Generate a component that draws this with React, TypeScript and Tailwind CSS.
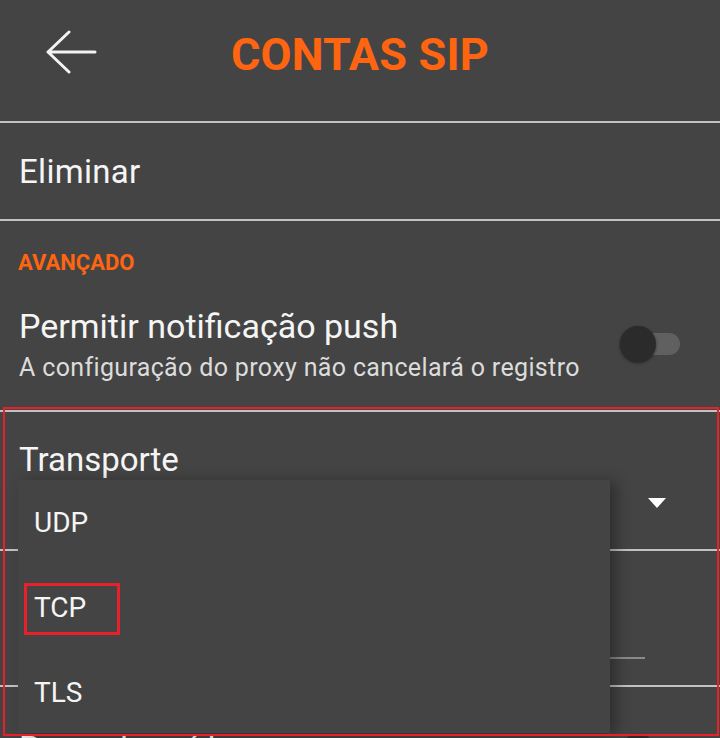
import React from 'react'

const options = ['UDP', 'TCP', 'TLS']

function BackArrow() {
  return (
    <svg width="52" height="44" viewBox="0 0 52 44" fill="none">
      <path d="M50 22H3M24 2L3 22l21 20" stroke="#f2f2f2" strokeWidth="3" strokeLinecap="round" strokeLinejoin="round" />
    </svg>
  )
}

function Toggle() {
  return (
    <div className="relative w-[64px] h-[40px]">
      <div className="absolute left-[22px] top-[9px] w-[40px] h-[22px] rounded-full bg-[#606060]" />
      <div className="absolute left-[2px] top-[2px] w-[36px] h-[36px] rounded-full bg-[#2b2b2b] shadow-[0_1px_3px_rgba(0,0,0,0.5)]" />
    </div>
  )
}

function Divider() {
  return <div className="h-[2px] bg-[#c2c2c2]" />
}

export default function App() {
  return (
    <div className="relative w-[720px] h-[738px] overflow-hidden bg-[#444444] text-[#f5f5f5] font-['Roboto',sans-serif]">
      {/* header */}
      <div className="relative h-[121px] flex items-center justify-center pb-[12px]">
        <div className="absolute left-[45px] top-[30px]">
          <BackArrow />
        </div>
        <h1 className="text-[45px] font-bold text-[#ff6410] leading-none tracking-[0.2px]">CONTAS SIP</h1>
      </div>
      <Divider />

      <div className="h-[96px] flex items-center px-[19px]">
        <span className="text-[33px] leading-none tracking-[0.3px]">Eliminar</span>
      </div>
      <Divider />

      <div className="px-[18px] pt-[30px]">
        <div className="text-[22px] leading-[24px] font-bold text-[#ff6410]">AVANÇADO</div>
      </div>

      <div className="h-[135px] flex items-center justify-between pl-[19px] pr-[38px]">
        <div className="pt-[4px]">
          <div className="text-[34px] leading-[40px]">Permitir notificação push</div>
          <div className="text-[25px] leading-[30px] text-[#dcdcdc] mt-[7px] tracking-[0.35px]">A configuração do proxy não cancelará o registro</div>
        </div>
        <div className="mt-[2px]">
          <Toggle />
        </div>
      </div>
      <Divider />

      {/* transport spinner */}
      <div className="px-[19px] pt-[28px]">
        <div className="text-[33px] leading-[40px]">Transporte</div>
      </div>
      <div className="h-[69px] flex items-start justify-end pr-[54px] pt-[18px]">
        <svg width="18" height="10" viewBox="0 0 18 10">
          <path d="M0 0h18L9 10z" fill="#ffffff" />
        </svg>
      </div>
      <Divider />

      <div className="h-[134px] flex items-end pl-[19px] pr-[75px] pb-[26px]">
        <div className="flex-1 h-[2px] bg-[#8a8a8a]" />
      </div>
      <Divider />

      <div className="flex items-start justify-between pl-[19px] pr-[38px] pt-[45px]">
        <span className="text-[33px] leading-none">Proxy de saída</span>
        <Toggle />
      </div>

      {/* dropdown popup */}
      <div className="absolute left-[18px] top-[480px] w-[592px] h-[253px] bg-[#444444] shadow-[6px_2px_14px_rgba(0,0,0,0.35)]">
        {options.map((o) => (
          <div key={o} className="h-[85px] flex items-center pl-[16px]">
            <span className="text-[28px] leading-none">{o}</span>
          </div>
        ))}
      </div>

      {/* annotation boxes */}
      <div className="absolute left-[3px] top-[407px] w-[716px] h-[329px] border-2 border-[#e8202a]" />
      <div className="absolute left-[24px] top-[583px] w-[96px] h-[52px] border-[3px] border-[#e8202a]" />
    </div>
  )
}
